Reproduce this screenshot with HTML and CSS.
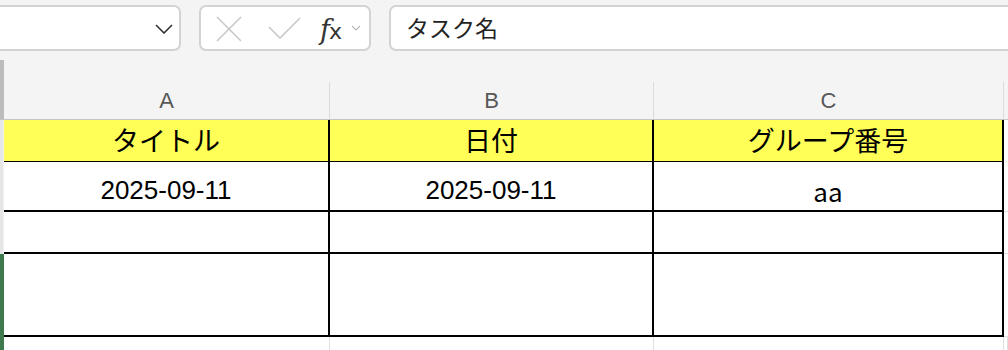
FILE: index.html
```html
<!DOCTYPE html>
<html lang="ja">
<head>
    <meta charset="UTF-8">
    <title>シート</title>
    <link rel="stylesheet" href="styles.css">
</head>
<body>

<!-- Formula bar -->
<div class="toolbar">
    <div class="name-box">
        <svg class="name-chevron" width="18" height="10" viewBox="0 0 18 10">
            <polyline points="1,1 9,9 17,1" fill="none" stroke="#333" stroke-width="1.6"/>
        </svg>
    </div>
    <div class="formula-buttons">
        <svg class="icon-cancel" width="26" height="26" viewBox="0 0 26 26">
            <line x1="1" y1="1" x2="25" y2="25" stroke="#c8c8c8" stroke-width="1.6"/>
            <line x1="25" y1="1" x2="1" y2="25" stroke="#c8c8c8" stroke-width="1.6"/>
        </svg>
        <svg class="icon-enter" width="33" height="22" viewBox="0 0 33 22">
            <polyline points="1,10 12,21 32,1" fill="none" stroke="#c8c8c8" stroke-width="1.6"/>
        </svg>
        <span class="fx"><i>f</i>x</span>
        <svg class="fx-chevron" width="10" height="6" viewBox="0 0 10 6">
            <polyline points="1,1 5,5 9,1" fill="none" stroke="#b8b8b8" stroke-width="1.2"/>
        </svg>
    </div>
    <div class="formula-input">タスク名</div>
</div>

<!-- Sheet -->
<div class="sheet">
    <div class="row col-header">
        <div class="row-head corner"></div>
        <div class="col-label">A</div>
        <div class="col-label">B</div>
        <div class="col-label">C</div>
        <div class="col-label filler"></div>
    </div>

    <div class="row r-title">
        <div class="row-head"></div>
        <div class="cell yellow jp">タイトル</div>
        <div class="cell yellow jp">日付</div>
        <div class="cell yellow jp">グループ番号</div>
        <div class="cell filler"></div>
    </div>

    <div class="row r-data">
        <div class="row-head"></div>
        <div class="cell">2025-09-11</div>
        <div class="cell">2025-09-11</div>
        <div class="cell jp-latin">aa</div>
        <div class="cell filler"></div>
    </div>

    <div class="row r-empty">
        <div class="row-head"></div>
        <div class="cell"></div>
        <div class="cell"></div>
        <div class="cell"></div>
        <div class="cell filler"></div>
    </div>

    <div class="row r-tall">
        <div class="row-head selected"></div>
        <div class="cell"></div>
        <div class="cell"></div>
        <div class="cell"></div>
        <div class="cell filler"></div>
    </div>

    <div class="row r-plain">
        <div class="row-head selected"></div>
        <div class="cell plain"></div>
        <div class="cell plain"></div>
        <div class="cell plain"></div>
        <div class="cell plain filler"></div>
    </div>
</div>

</body>
</html>
```

FILE: styles.css
```css
/* Reset */
*,
*::before,
*::after {
    box-sizing: border-box;
    margin: 0;
    padding: 0;
}

:root {
    --bg-chrome: #f4f4f4;
    --box-border: #d3d3d3;
    --grid-light: #e0e0e0;
    --cell-line: #000000;
    --yellow: #ffff57;
    --selected: #3f7a4e;
}

html, body {
    width: 1008px;
    height: 350px;
    overflow: hidden;
    background: var(--bg-chrome);
    font-family: "Liberation Sans", Arial, "Noto Sans CJK JP", sans-serif;
    color: #000;
}

/* --- Formula bar --- */
.toolbar {
    display: flex;
    gap: 18px;
    height: 60px;
    padding-top: 5px;
}

.name-box,
.formula-buttons,
.formula-input {
    height: 46px;
    background: #fff;
    border: 2px solid var(--box-border);
    border-radius: 7px;
}

.name-box {
    width: 201px;
    margin-left: -20px;
    display: flex;
    align-items: center;
    justify-content: flex-end;
    padding-right: 6px;
}

.name-chevron {
    margin-top: 2px;
}

.formula-buttons {
    width: 172px;
    display: flex;
    align-items: center;
    padding-left: 15px;
}

.icon-cancel {
    margin-top: 1px;
}

.icon-enter {
    margin-left: 26px;
}

.fx {
    margin-left: 19px;
    font-family: "DejaVu Sans", sans-serif;
    font-size: 22px;
    color: #333;
    line-height: 1;
    margin-top: 2px;
    letter-spacing: -1px;
}

.fx i {
    font-family: "DejaVu Serif", serif;
    font-size: 27px;
}

.fx-chevron {
    margin-left: 10px;
}

.formula-input {
    flex: 1;
    margin-right: -20px;
    display: flex;
    align-items: center;
    padding-left: 15px;
    font-family: "Noto Sans CJK JP", sans-serif;
    font-size: 23px;
    color: #222;
    padding-bottom: 2px;
}

/* --- Sheet grid --- */
.row {
    display: grid;
    grid-template-columns: 4px 326px 324px 350px 1fr;
}

.row-head {
    background: #e6e6e6;
    border-right: 1px solid #f2f2f2;
}

.row-head.corner {
    background: #bcbcbc;
    border-right: none;
}

.row-head.selected {
    background: var(--selected);
    border-right: none;
}

.col-header {
    height: 60px;
    align-items: end;
    border-bottom: 1px solid #c4c4c4;
}

.col-header .row-head {
    height: 59px;
}

.col-label {
    height: 37px;
    display: flex;
    align-items: center;
    justify-content: center;
    border-right: 1px solid #dcdcdc;
    color: #585858;
    font-size: 22px;
    padding-top: 1px;
}

.col-label.filler {
    border-right: none;
}

.cell {
    background: #fff;
    border-right: 2px solid var(--cell-line);
    border-bottom: 2px solid var(--cell-line);
    display: flex;
    align-items: center;
    justify-content: center;
    font-size: 26px;
    white-space: nowrap;
}

.cell.filler {
    border-right: none;
    border-bottom: 1px solid var(--grid-light);
}

.cell.yellow {
    background: var(--yellow);
}

.jp {
    font-family: "Noto Sans CJK JP", sans-serif;
    font-size: 27px;
    padding-bottom: 2px;
}

.jp-latin {
    font-family: "Noto Sans CJK JP", sans-serif;
    font-size: 26px;
}

.r-title { height: 42px; }
.r-data { height: 50px; }
.r-data .cell { padding-top: 8px; }
.r-empty { height: 42px; }
.r-tall { height: 83px; }
.r-plain { height: 40px; }

.cell.plain {
    border-right: 1px solid var(--grid-light);
    border-bottom: 1px solid var(--grid-light);
}
```
